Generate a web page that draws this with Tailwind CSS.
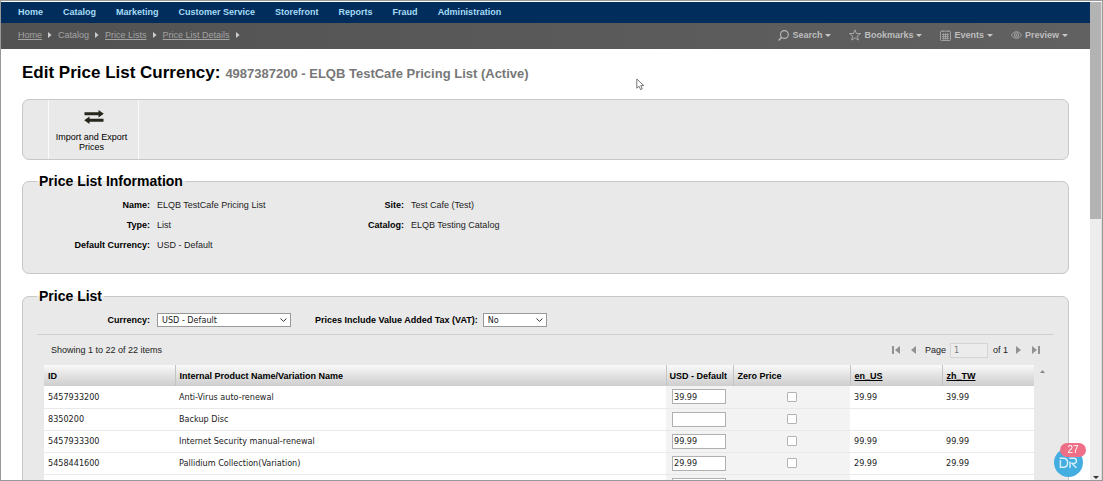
<!DOCTYPE html>
<html lang="en">
<head>
<meta charset="utf-8">
<title>Edit Price List Currency</title>
<script src="https://cdn.jsdelivr.net/npm/@tailwindcss/browser@4"></script>
</head>
<body class="h-screen overflow-hidden border border-[#999] bg-white font-['Liberation_Sans',Arial,sans-serif] text-[9px] leading-[10px] text-[#222]">
<div class="flex h-full pt-px">
  <div class="h-full min-w-0 flex-1 overflow-hidden">
    <nav class="flex h-[21px] items-center gap-[20px] bg-[#002d5c] pb-[2px] pl-[17px] font-bold text-[#a5dcf7]">
      <a href="#">Home</a><a href="#">Catalog</a><a href="#">Marketing</a><a href="#">Customer Service</a><a href="#">Storefront</a><a href="#">Reports</a><a href="#">Fraud</a><a href="#">Administration</a>
    </nav>
    <div class="flex h-[26px] items-center justify-between bg-linear-to-r from-[#525252] to-[#616161] pr-[22px] pb-[2px] pl-[17px] text-[#a3a3a3]">
      <div class="flex items-center gap-[6px]">
        <a href="#" class="underline">Home</a>
        <svg class="h-[6px] w-[4px] fill-[#ccc]" viewBox="0 0 4 6"><path d="M0 0L3.6 3L0 6Z"/></svg>
        <span>Catalog</span>
        <svg class="h-[6px] w-[4px] fill-[#ccc]" viewBox="0 0 4 6"><path d="M0 0L3.6 3L0 6Z"/></svg>
        <a href="#" class="underline">Price Lists</a>
        <svg class="h-[6px] w-[4px] fill-[#ccc]" viewBox="0 0 4 6"><path d="M0 0L3.6 3L0 6Z"/></svg>
        <a href="#" class="underline">Price List Details</a>
        <svg class="h-[6px] w-[4px] fill-[#ccc]" viewBox="0 0 4 6"><path d="M0 0L3.6 3L0 6Z"/></svg>
      </div>
      <div class="flex items-center gap-[18px] font-bold text-[#bdbdbd]">
        <button class="flex items-center gap-[3px]">
          <svg class="h-[11px] w-[11px]" viewBox="0 0 11 11" fill="none" stroke="#b8b8b8" stroke-width="1.1"><circle cx="6.4" cy="4.5" r="3.9"/><path d="M3.6 7.2L.6 10.4" stroke-width="1.5"/></svg>
          Search
          <svg class="h-[3px] w-[6px] fill-[#c8c8c8]" viewBox="0 0 6 3"><path d="M0 0H6L3 3Z"/></svg>
        </button>
        <button class="flex items-center gap-[3px]">
          <svg class="h-[12px] w-[12px]" viewBox="0 0 12 12" fill="none" stroke="#b0b0b0" stroke-width=".9" stroke-linejoin="round"><path d="M6 .8L7.4 4.5L11.5 4.6L8.2 7.1L9.4 11.1L6 8.8L2.6 11.1L3.8 7.1L.5 4.6L4.6 4.5Z"/></svg>
          Bookmarks
          <svg class="h-[3px] w-[6px] fill-[#c8c8c8]" viewBox="0 0 6 3"><path d="M0 0H6L3 3Z"/></svg>
        </button>
        <button class="flex items-center gap-[3px]">
          <svg class="h-[11px] w-[11px]" viewBox="0 0 11 11" fill="none" stroke="#a8a8a8" stroke-width=".9"><rect x=".5" y="1.2" width="10" height="9.3" rx=".8"/><path d="M2.8 0V2M8.2 0V2M2 4.5H9M2 6.5H9M2 8.5H9M3.6 3.2V9.6M5.5 3.2V9.6M7.4 3.2V9.6" stroke-width=".8"/></svg>
          Events
          <svg class="h-[3px] w-[6px] fill-[#c8c8c8]" viewBox="0 0 6 3"><path d="M0 0H6L3 3Z"/></svg>
        </button>
        <button class="flex items-center gap-[3px]">
          <svg class="h-[8px] w-[11px]" viewBox="0 0 11 8" fill="none" stroke="#a8a8a8" stroke-width=".9"><path d="M.4 4Q2.4.6 5.5.6T10.6 4Q8.6 7.4 5.5 7.4T.4 4Z"/><circle cx="5.5" cy="4" r="2.2"/><circle cx="5.5" cy="4" r=".7"/></svg>
          Preview
          <svg class="h-[3px] w-[6px] fill-[#c8c8c8]" viewBox="0 0 6 3"><path d="M0 0H6L3 3Z"/></svg>
        </button>
      </div>
    </div>

    <main class="pr-[21px] pl-[21px]">
      <h1 class="flex h-[50px] items-baseline gap-[5px] pt-[14px] text-[17px] leading-[20px] font-bold text-black">Edit Price List Currency: <span class="text-[13px] text-[#777]">4987387200 - ELQB TestCafe Pricing List (Active)</span></h1>

      <div class="flex h-[61px] rounded-[7px] border border-[#c8c8c8] bg-[#e9e9e9] pl-[25px]">
        <button class="flex w-[91px] flex-col items-center border-x border-[#fafafa] pt-[10px] text-black">
          <svg class="mb-[8px] h-[14px] w-[20px] fill-[#26261c]" viewBox="0 0 20 14"><path d="M.5 2.3H14.5V0L19.8 3.8L14.5 7.6V5.3H.5ZM19.5 8.7H5.5V6.4L.2 10.2L5.5 14V11.7H19.5Z"/></svg>
          <span class="pr-[4px]">Import and Export<br>Prices</span>
        </button>
      </div>

      <fieldset class="mt-[12px] h-[102px] rounded-[7px] border border-[#c8c8c8] bg-[#e9e9e9] pl-[14px]">
        <legend class="px-[2px] text-[14px] leading-[18px] font-bold text-black">Price List Information</legend>
        <div class="grid grid-cols-[113px_218px_22px_1fr] gap-x-[7px] gap-y-[10px] pt-[10px]">
          <b class="text-right text-black">Name:</b><span>ELQB TestCafe Pricing List</span><b class="text-right text-black">Site:</b><span>Test Cafe (Test)</span>
          <b class="text-right text-black">Type:</b><span>List</span><b class="flex justify-end text-black">Catalog:</b><span>ELQB Testing Catalog</span>
          <b class="text-right text-black">Default Currency:</b><span>USD - Default</span>
        </div>
      </fieldset>

      <fieldset class="mt-[13px] h-[300px] rounded-[7px] border border-[#c8c8c8] bg-[#e9e9e9] px-[14px]">
        <legend class="px-[2px] text-[14px] leading-[18px] font-bold text-black">Price List</legend>
        <div class="flex h-[30px] items-center border-b border-[#d0d0d0]">
          <label for="currency" class="w-[113px] text-right font-bold text-black">Currency:</label>
          <div class="relative ml-[7px]">
            <select id="currency" class="block h-[14px] w-[134px] appearance-none border border-[#999] bg-white pl-[4px] font-['DejaVu_Sans_Condensed','DejaVu_Sans',sans-serif] leading-[12px]"><option>USD - Default</option></select>
            <svg class="pointer-events-none absolute top-[5px] right-[4px] h-[4px] w-[7px]" viewBox="0 0 7 4" fill="none" stroke="#333"><path d="M.5.5L3.5 3.4L6.5.5"/></svg>
          </div>
          <label for="vat" class="ml-[24px] font-bold text-black">Prices Include Value Added Tax (VAT):</label>
          <div class="relative ml-[5px]">
            <select id="vat" class="block h-[14px] w-[64px] appearance-none border border-[#999] bg-white pl-[4px] font-['DejaVu_Sans_Condensed','DejaVu_Sans',sans-serif] leading-[12px]"><option>No</option></select>
            <svg class="pointer-events-none absolute top-[5px] right-[4px] h-[4px] w-[7px]" viewBox="0 0 7 4" fill="none" stroke="#333"><path d="M.5.5L3.5 3.4L6.5.5"/></svg>
          </div>
        </div>
        <div class="flex h-[30px] items-center justify-between pr-[14px] pl-[14px]">
          <span>Showing 1 to 22 of 22 items</span>
          <div class="flex items-center">
            <button aria-label="First page"><svg class="h-[8px] w-[8px] fill-[#929292]" viewBox="0 0 8 8"><path d="M0 0H2V8H0ZM8 0V8L3 4Z"/></svg></button>
            <button aria-label="Previous page" class="ml-[11px]"><svg class="h-[8px] w-[5px] fill-[#929292]" viewBox="0 0 5 8"><path d="M5 0V8L0 4Z"/></svg></button>
            <label for="page" class="ml-[9px]">Page</label>
            <input id="page" value="1" class="ml-[4px] h-[15px] w-[38px] border border-[#d4d4d4] bg-[#ececec] pl-[3px] font-['DejaVu_Sans_Condensed','DejaVu_Sans',sans-serif] text-[#777]">
            <span class="ml-[5px]">of 1</span>
            <button aria-label="Next page" class="ml-[8px]"><svg class="h-[8px] w-[5px] fill-[#929292]" viewBox="0 0 5 8"><path d="M0 0V8L5 4Z"/></svg></button>
            <button aria-label="Last page" class="ml-[11px]"><svg class="h-[8px] w-[8px] fill-[#929292]" viewBox="0 0 8 8"><path d="M6 0H8V8H6ZM0 0V8L5 4Z"/></svg></button>
          </div>
        </div>
        <div class="flex items-start gap-[6px] pr-[9px] pl-[7px]">
          <table class="w-full table-fixed border-collapse bg-white text-left">
            <colgroup><col class="w-[131px]"><col><col class="w-[67px]"><col class="w-[117px]"><col class="w-[92px]"><col class="w-[92px]"></colgroup>
            <thead>
              <tr class="h-[21px] bg-linear-to-b from-[#fafafa] via-[#e2e2e2] to-[#cecece] text-black">
                <th class="pl-[4px]">ID</th>
                <th class="border-l border-[#c4c4c4] pl-[4px]">Internal Product Name/Variation Name</th>
                <th class="border-l border-[#c4c4c4] pl-[3px]">USD - Default</th>
                <th class="border-l border-[#c4c4c4] pl-[4px]">Zero Price</th>
                <th class="border-l border-[#c4c4c4] pl-[4px]"><a href="#" class="underline">en_US</a></th>
                <th class="border-l border-[#c4c4c4] pl-[4px]"><a href="#" class="underline">zh_TW</a></th>
              </tr>
            </thead>
            <tbody id="rows" class="font-['DejaVu_Sans_Condensed','DejaVu_Sans',sans-serif]"></tbody>
          </table>
          <svg class="mt-[5px] h-[3px] w-[5px] shrink-0 fill-[#888]" viewBox="0 0 5 3"><path d="M0 3H5L2.5 0Z"/></svg>
        </div>
      </fieldset>
    </main>
  </div>

  <div class="flex w-[12px] flex-col justify-between border-r border-[#ddd] bg-[#ededed]">
    <div class="h-[217px] bg-[#b3b3b3]"></div>
    <svg class="mb-[1px] ml-[3px] h-[3px] w-[6px] fill-[#333]" viewBox="0 0 6 3"><path d="M0 0H6L3 3Z"/></svg>
  </div>
</div>

<button aria-label="DR, 27 notifications" class="fixed right-[20px] bottom-[4px] h-[29px] w-[29px] rounded-full bg-[#45aee0]">
  <svg class="h-[29px] w-[29px]" viewBox="0 0 29 29" fill="none" stroke="#d9f0fb" stroke-width="1.4"><path d="M6.4 12V19.3H9.4Q13.6 19.3 13.6 14.8T9.4 10.3H5.6M16 19.9V13.5M15.4 10.3H20Q22.4 10.3 22.4 12.8T20 15.4H18L22.4 19.8"/></svg>
  <span class="absolute -top-[5px] left-[6px] h-[14px] w-[26px] rounded-full bg-[#ee6f86] text-center text-[10px] leading-[14px] text-white">27</span>
</button>
<svg class="pointer-events-none fixed top-[78px] left-[636px] h-[13px] w-[9px]" viewBox="0 0 9 13" fill="#fff" stroke="#555" stroke-width=".8"><path d="M.8 1V10.2L3 8.2L4.6 11.6L6.2 10.9L4.8 7.6H7.8Z"/></svg>

<script>
const products = [
  ["5457933200", "Anti-Virus auto-renewal", "39.99"],
  ["8350200", "Backup Disc", ""],
  ["5457933300", "Internet Security manual-renewal", "99.99"],
  ["5458441600", "Pallidium Collection(Variation)", "29.99"],
  ["", "", ""]
];
document.getElementById("rows").innerHTML = products.map(([id, name, price]) => `
  <tr class="h-[22px] border-b border-[#e9e9e9]">
    <td class="pl-[4px]">${id}</td>
    <td class="pl-[4px]">${name}</td>
    <td class="bg-[#f3f3f3] pl-[6px]"><input aria-label="USD price ${name}" value="${price}" class="block h-[15px] w-[54px] border border-[#b0b0b0] bg-white pl-[1px]"></td>
    <td class="bg-[#f3f3f3]"><input type="checkbox" aria-label="Zero price ${name}" class="mx-auto block h-[10px] w-[10px] appearance-none rounded-[1px] border border-[#b4b4b4] bg-white"></td>
    <td class="pl-[4px]">${price}</td>
    <td class="pl-[4px]">${price}</td>
  </tr>`).join("");
</script>
</body>
</html>
